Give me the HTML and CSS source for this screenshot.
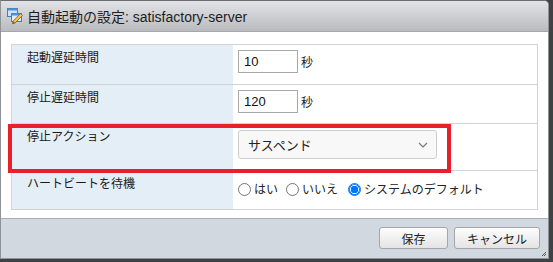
FILE: index.html
```html
<!DOCTYPE html>
<html lang="ja">
<head>
<meta charset="utf-8">
<title>自動起動の設定</title>
<link rel="stylesheet" href="styles.css">
</head>
<body>
<div class="window">
  <div class="titlebar">
    <svg class="title-icon" width="18" height="18" viewBox="0 0 18 18">
      <rect x="1.5" y="1.5" width="10" height="8" fill="#cfe3f5" stroke="#3c7fc4"/>
      <rect x="1.5" y="1.5" width="10" height="2" fill="#4f91d6"/>
      <rect x="5.5" y="6.5" width="10" height="8" fill="#d9eaf8" stroke="#3c7fc4"/>
      <rect x="5.5" y="6.5" width="10" height="2" fill="#4f91d6"/>
      <path d="M14.5 6.5 L16.5 8.5 L9 16 L6.5 16.8 L7.2 14.2 Z" fill="#f4c542" stroke="#8a5a10" stroke-width="0.8"/>
      <path d="M6.5 16.8 L7.2 14.2 L9 16 Z" fill="#d23a2a"/>
    </svg>
    <span class="title-text">自動起動の設定: satisfactory-server</span>
  </div>
  <div class="content">
    <div class="form">
      <div class="row r1">
        <div class="label">起動遅延時間</div>
        <div class="value"><input class="num" type="text" value="10"><span class="unit">秒</span></div>
      </div>
      <div class="row r2">
        <div class="label">停止遅延時間</div>
        <div class="value"><input class="num" type="text" value="120"><span class="unit">秒</span></div>
      </div>
      <div class="row r3">
        <div class="label">停止アクション</div>
        <div class="value">
          <div class="select"><span>サスペンド</span>
            <svg class="chev" width="10" height="6" viewBox="0 0 10 6"><path d="M1 1 L5 5 L9 1" fill="none" stroke="#777" stroke-width="1.2"/></svg>
          </div>
        </div>
      </div>
      <div class="row r4">
        <div class="label">ハートビートを待機</div>
        <div class="value radios">
          <label class="radio"><span class="circle"></span>はい</label>
          <label class="radio"><span class="circle"></span>いいえ</label>
          <label class="radio"><span class="circle checked"></span>システムのデフォルト</label>
        </div>
      </div>
    </div>
    <div class="highlight"></div>
  </div>
  <div class="footer">
    <button class="btn save">保存</button>
    <button class="btn">キャンセル</button>
    <svg class="grip" width="6" height="6" viewBox="0 0 6 6">
      <path d="M5 1 L1 5 M5 3 L3 5 M5 5 L5 5" stroke="#555" stroke-width="1"/>
    </svg>
  </div>
</div>
</body>
</html>
```

FILE: styles.css
```css
html, body {
  margin: 0;
  padding: 0;
}
body {
  width: 553px;
  height: 262px;
  background: #3f4245;
  font-family: "Noto Sans CJK JP", "Liberation Sans", sans-serif;
  font-size: 12px;
  color: #222;
  overflow: hidden;
}
.window {
  width: 547px;
  height: 257px;
  background: #fff;
  border: 1px solid #8f9296;
  border-top-color: #6c6e72;
  border-radius: 0 5px 0 0;
  display: flex;
  flex-direction: column;
  position: relative;
  overflow: hidden;
}
.titlebar {
  height: 30px;
  flex: none;
  background: linear-gradient(#e2e3e7, #babbbf);
  border-bottom: 1px solid #a5a6aa;
  display: flex;
  align-items: center;
  padding-left: 5px;
  gap: 3px;
}
.title-icon { flex: none; }
.title-text {
  font-family: "Liberation Sans", "Noto Sans CJK JP", sans-serif;
  font-size: 14px;
  color: #1e1e1e;
}
.content {
  flex: 1;
  position: relative;
  padding: 12px 10px 0 10px;
}
.form {
  border: 1px solid #d3d3d3;
  border-bottom: none;
}
.row {
  display: grid;
  grid-template-columns: 221px 1fr;
  border-bottom: 1px solid #d3d3d3;
}
.r1 { height: 39px; }
.r2 { height: 38px; }
.r3 { height: 46px; }
.r4 { height: 38px; }
.label {
  background: #e4eef6;
  padding: 3px 15px 0 15px;
  line-height: 18px;
  color: #1a1a1a;
}
.value {
  padding: 5px 0 0 5px;
  display: flex;
  align-items: flex-start;
}
.num {
  width: 60px;
  height: 23px;
  box-sizing: border-box;
  border: 1px solid #a8a8a8;
  padding: 0 5px;
  font-family: "Liberation Sans", sans-serif;
  font-size: 13px;
  color: #111;
  margin: 0;
  outline: none;
}
.unit {
  margin-left: 3px;
  line-height: 23px;
}
.select {
  width: 199px;
  height: 29px;
  box-sizing: border-box;
  margin-top: 1px;
  border: 1px solid #cdcdcd;
  border-radius: 3px;
  background: #f8f8f8;
  display: flex;
  align-items: center;
  justify-content: space-between;
  padding: 0 8px 0 9px;
  font-size: 13px;
  color: #222;
}
.chev { margin-top: 1px; }
.radios {
  padding-top: 8px;
  align-items: center;
  height: 20px;
}
.radio {
  display: flex;
  align-items: center;
  gap: 3px;
  margin-right: 8px;
  line-height: 18px;
  color: #222;
}
.radio:last-child { margin-left: 2px; }
.circle {
  width: 11px;
  height: 11px;
  border: 1px solid #767676;
  border-radius: 50%;
  background: #fff;
  box-sizing: content-box;
}
.circle.checked {
  border-color: #0075ff;
  background: radial-gradient(circle, #0075ff 0 3.5px, #fff 4px);
  box-shadow: inset 0 0 0 1px #0075ff;
}
.highlight {
  position: absolute;
  left: 7px;
  top: 92px;
  width: 435px;
  height: 41px;
  border: 4px solid #e8202a;
}
.footer {
  height: 40px;
  flex: none;
  background: #d1d8e0;
  border-top: 1px solid #a9adb2;
  display: flex;
  align-items: flex-start;
  justify-content: flex-end;
  gap: 6px;
  padding: 8px 8px 0 0;
  box-sizing: border-box;
  position: relative;
}
.btn {
  height: 22px;
  min-width: 69px;
  padding: 0 12px;
  box-sizing: border-box;
  border: 1px solid #a6a6a6;
  border-radius: 3px;
  background: linear-gradient(#fdfdfd, #e4e4e4);
  font-family: "Noto Sans CJK JP", sans-serif;
  font-size: 12px;
  color: #222;
  margin: 0;
}
.grip {
  position: absolute;
  right: 1px;
  bottom: 1px;
}
```
